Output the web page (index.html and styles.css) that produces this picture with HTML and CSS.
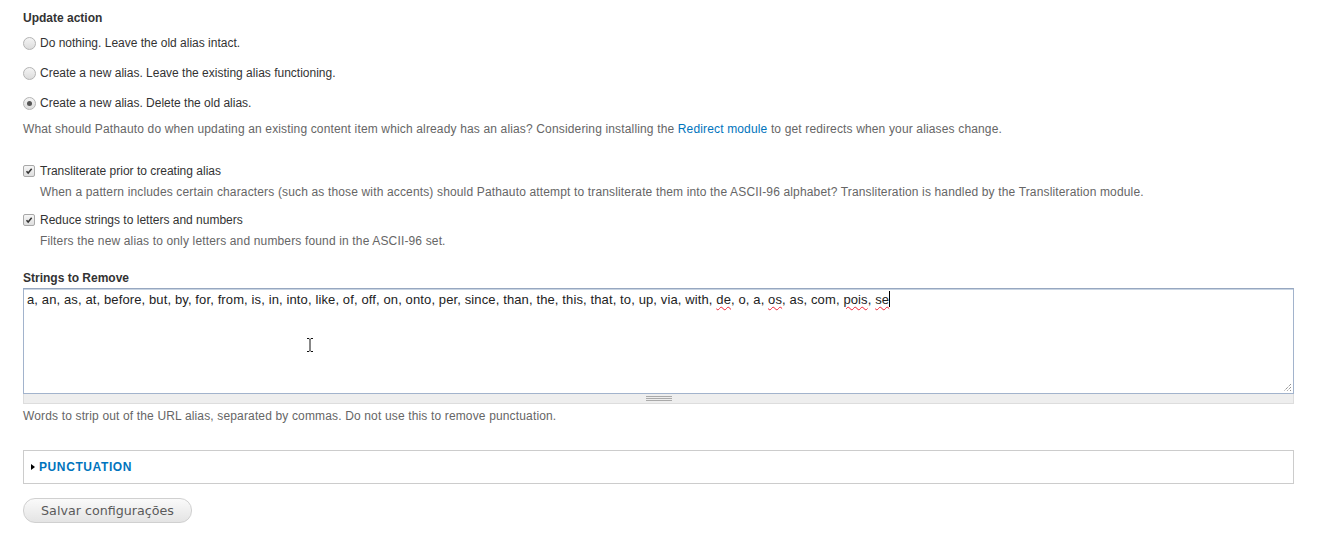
FILE: index.html
```html
<!DOCTYPE html>
<html>
<head>
<meta charset="utf-8">
<link rel="stylesheet" href="styles.css">
</head>
<body>
<div class="page">
  <div class="form-item">
    <div class="label">Update action</div>
    <div class="radios">
      <div class="option"><span class="radio"></span><span class="opt-label">Do nothing. Leave the old alias intact.</span></div>
      <div class="option"><span class="radio"></span><span class="opt-label">Create a new alias. Leave the existing alias functioning.</span></div>
      <div class="option"><span class="radio checked"></span><span class="opt-label">Create a new alias. Delete the old alias.</span></div>
    </div>
    <div class="description">What should Pathauto do when updating an existing content item which already has an alias? Considering installing the <a href="#">Redirect module</a> to get redirects when your aliases change.</div>
  </div>

  <div class="check-item first">
    <div class="option"><span class="checkbox"><svg viewBox="0 0 12 12" width="12" height="12"><path d="M3 6.2 L5 8.4 L9.2 3.4" fill="none" stroke="#333" stroke-width="1.8"/></svg></span><span class="opt-label">Transliterate prior to creating alias</span></div>
    <div class="description indent">When a pattern includes certain characters (such as those with accents) should Pathauto attempt to transliterate them into the ASCII-96 alphabet? Transliteration is handled by the Transliteration module.</div>
  </div>
  <div class="check-item">
    <div class="option"><span class="checkbox"><svg viewBox="0 0 12 12" width="12" height="12"><path d="M3 6.2 L5 8.4 L9.2 3.4" fill="none" stroke="#333" stroke-width="1.8"/></svg></span><span class="opt-label">Reduce strings to letters and numbers</span></div>
    <div class="description indent">Filters the new alias to only letters and numbers found in the ASCII-96 set.</div>
  </div>

  <div class="form-item strings">
    <div class="label">Strings to Remove</div>
    <div class="textarea-wrap">
      <div class="textarea">a, an, as, at, before, but, by, for, from, is, in, into, like, of, off, on, onto, per, since, than, the, this, that, to, up, via, with, <span class="sp">de</span>, o, a, <span class="sp">os</span>, as, com, <span class="sp">pois</span>, <span class="sp">se</span><span class="caret"></span>
        <svg class="resize" viewBox="0 0 10 10" width="10" height="10"><path d="M9 2 L2 9 M9 5 L5 9 M9 8 L8 9" stroke="#666" stroke-width="1" stroke-dasharray="1 1"/></svg>
        <svg class="ibeam" viewBox="0 0 8 16" width="8" height="16"><path d="M1 1.5 H3 L4 2.5 L5 1.5 H7 M4 2.5 V13.5 M1 14.5 H3 L4 13.5 L5 14.5 H7" fill="none" stroke="#111" stroke-width="1"/></svg>
      </div>
      <div class="grippie"><span class="grip"></span></div>
    </div>
    <div class="description">Words to strip out of the URL alias, separated by commas. Do not use this to remove punctuation.</div>
  </div>

  <div class="fieldset">
    <span class="tri"></span><a href="#" class="legend">PUNCTUATION</a>
  </div>

  <button class="btn">Salvar configurações</button>
</div>
</body>
</html>
```
FILE: styles.css
```css
html, body {
  margin: 0;
  padding: 0;
  background: #fff;
}
body {
  font-family: "Liberation Sans", Arial, sans-serif;
  font-size: 12px;
  color: #333;
}
.page {
  padding: 11px 24px 20px 23px;
}
.label {
  font-weight: bold;
  font-size: 12px;
  line-height: 15px;
  color: #333;
}
.radios {
  margin-top: 2px;
}
.option {
  display: flex;
  align-items: center;
  height: 30px;
}
.radio {
  width: 11px;
  height: 11px;
  border: 1px solid #b4b4b4;
  border-radius: 50%;
  background: linear-gradient(#f4f4f4, #dcdcdc);
  box-sizing: content-box;
  margin-right: 4px;
  position: relative;
}
.radio.checked::after {
  content: "";
  position: absolute;
  left: 3px;
  top: 3px;
  width: 5px;
  height: 5px;
  border-radius: 50%;
  background: #555;
}
.checkbox {
  width: 10px;
  height: 10px;
  border: 1px solid #a8a8a8;
  border-radius: 2px;
  background: linear-gradient(#f6f6f6, #dedede);
  margin-right: 5px;
  display: flex;
  align-items: center;
  justify-content: center;
}
.checkbox svg { display: block; }
.opt-label {
  color: #333;
}
.description {
  color: #666;
  font-size: 12px;
  line-height: 15px;
  letter-spacing: 0.15px;
  margin-top: 4px;
}
.description a {
  color: #0074bd;
  text-decoration: none;
}
.check-item.first {
  margin-top: 26px;
}
.check-item .option {
  height: 15px;
}
.check-item .description.indent {
  padding-left: 17px;
  margin-top: 7px;
  margin-bottom: 12px;
}
.strings {
  margin-top: 22px;
}
.strings .label {
  margin-bottom: 2px;
}
.textarea-wrap {
  width: 1271px;
}
.textarea {
  position: relative;
  border: 1px solid #a2b3cc;
  border-top-color: #97a7c0;
  box-shadow: inset 0 1px 0 #c8d4e2;
  padding: 2px 3px;
  box-sizing: border-box;
  height: 106px;
  color: #222;
  font-size: 13px;
  line-height: 17px;
  letter-spacing: 0.12px;
}
.sp {
  text-decoration: underline wavy #e23;
  text-decoration-thickness: 1px;
  text-underline-offset: 2px;
}
.caret {
  display: inline-block;
  width: 1px;
  height: 16px;
  background: #000;
  vertical-align: top;
}
.resize {
  position: absolute;
  right: 1px;
  bottom: 1px;
}
.ibeam {
  position: absolute;
  left: 282px;
  top: 48px;
}
.grippie {
  height: 9px;
  background: #eee;
  border: 1px solid #ddd;
  border-top: 0;
  display: flex;
  justify-content: center;
  align-items: center;
}
.grip {
  width: 26px;
  height: 5px;
  border-top: 1px solid #aaa;
  border-bottom: 1px solid #aaa;
  box-sizing: border-box;
  position: relative;
}
.grip::after {
  content: "";
  position: absolute;
  left: 0;
  right: 0;
  top: 1px;
  border-top: 1px solid #aaa;
}
.strings .description {
  margin-top: 5px;
}
.fieldset {
  margin-top: 26px;
  width: 1271px;
  height: 34px;
  border: 1px solid #ccc;
  box-sizing: border-box;
  display: flex;
  align-items: center;
  padding-left: 7px;
}
.tri {
  width: 0;
  height: 0;
  border-left: 4px solid #000;
  border-top: 3.5px solid transparent;
  border-bottom: 3.5px solid transparent;
  margin-right: 4px;
}
.legend {
  color: #0074bd;
  font-weight: bold;
  font-size: 12px;
  letter-spacing: 0.6px;
  text-decoration: none;
}
.btn {
  margin-top: 14px;
  display: block;
  width: 169px;
  height: 25px;
  border: 1px solid #d0d0d0;
  border-radius: 12px;
  background: linear-gradient(#fafafa, #e4e4e4);
  font-family: "DejaVu Sans", sans-serif;
  font-size: 12.7px;
  color: #5a5a5a;
  padding: 0;
}
```
